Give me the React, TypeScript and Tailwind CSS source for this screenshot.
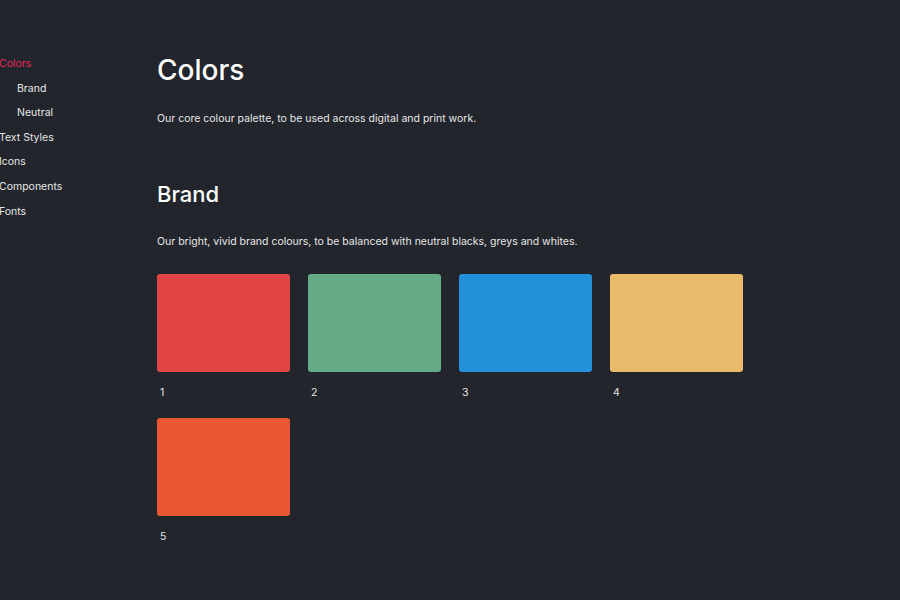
import React from "react";

const swatches = [
  { n: "1", c: "#e04444" },
  { n: "2", c: "#65ab87" },
  { n: "3", c: "#2391d9" },
  { n: "4", c: "#e8ba69" },
  { n: "5", c: "#e85732" },
];

export default function App() {
  return (
    <div
      className="w-[900px] h-[600px] bg-[#22252c] text-[#e6e6e6] flex overflow-hidden"
      style={{ fontFamily: "Inter, 'Noto Sans', sans-serif" }}
    >
      <nav className="w-[157px] shrink-0 pt-[57px] ml-[-1px] flex flex-col text-[10.5px] leading-[14px]">
        <div className="h-[24.6px] text-[#e8265e]">Colors</div>
        <div className="h-[24.6px] pl-[18px]">Brand</div>
        <div className="h-[24.6px] pl-[18px]">Neutral</div>
        <div className="h-[24.6px]">Text Styles</div>
        <div className="h-[24.6px]">Icons</div>
        <div className="h-[24.6px]">Components</div>
        <div className="h-[24.6px]">Fonts</div>
      </nav>
      <main className="flex-1 pt-[53px] pl-[1px]">
        <h1 className="text-[28px] leading-[34px] font-medium text-white">Colors</h1>
        <p className="mt-[25px] text-[10.5px] leading-[14px]">
          Our core colour palette, to be used across digital and print work.
        </p>
        <h2 className="mt-[55px] text-[22px] leading-[26px] font-medium text-white">Brand</h2>
        <p className="mt-[28px] text-[10.5px] leading-[14px]">
          Our bright, vivid brand colours, to be balanced with neutral blacks, greys and whites.
        </p>
        <div className="mt-[25px] grid grid-cols-[repeat(4,133px)] gap-x-[18px] gap-y-[19px]">
          {swatches.map((s) => (
            <div key={s.n} className="flex flex-col">
              <div className="h-[98px] rounded-[3px]" style={{ backgroundColor: s.c }} />
              <div className="mt-[14px] mb-[-1px] pl-[3px] text-[10.5px] leading-[14px]">{s.n}</div>
            </div>
          ))}
        </div>
      </main>
    </div>
  );
}
